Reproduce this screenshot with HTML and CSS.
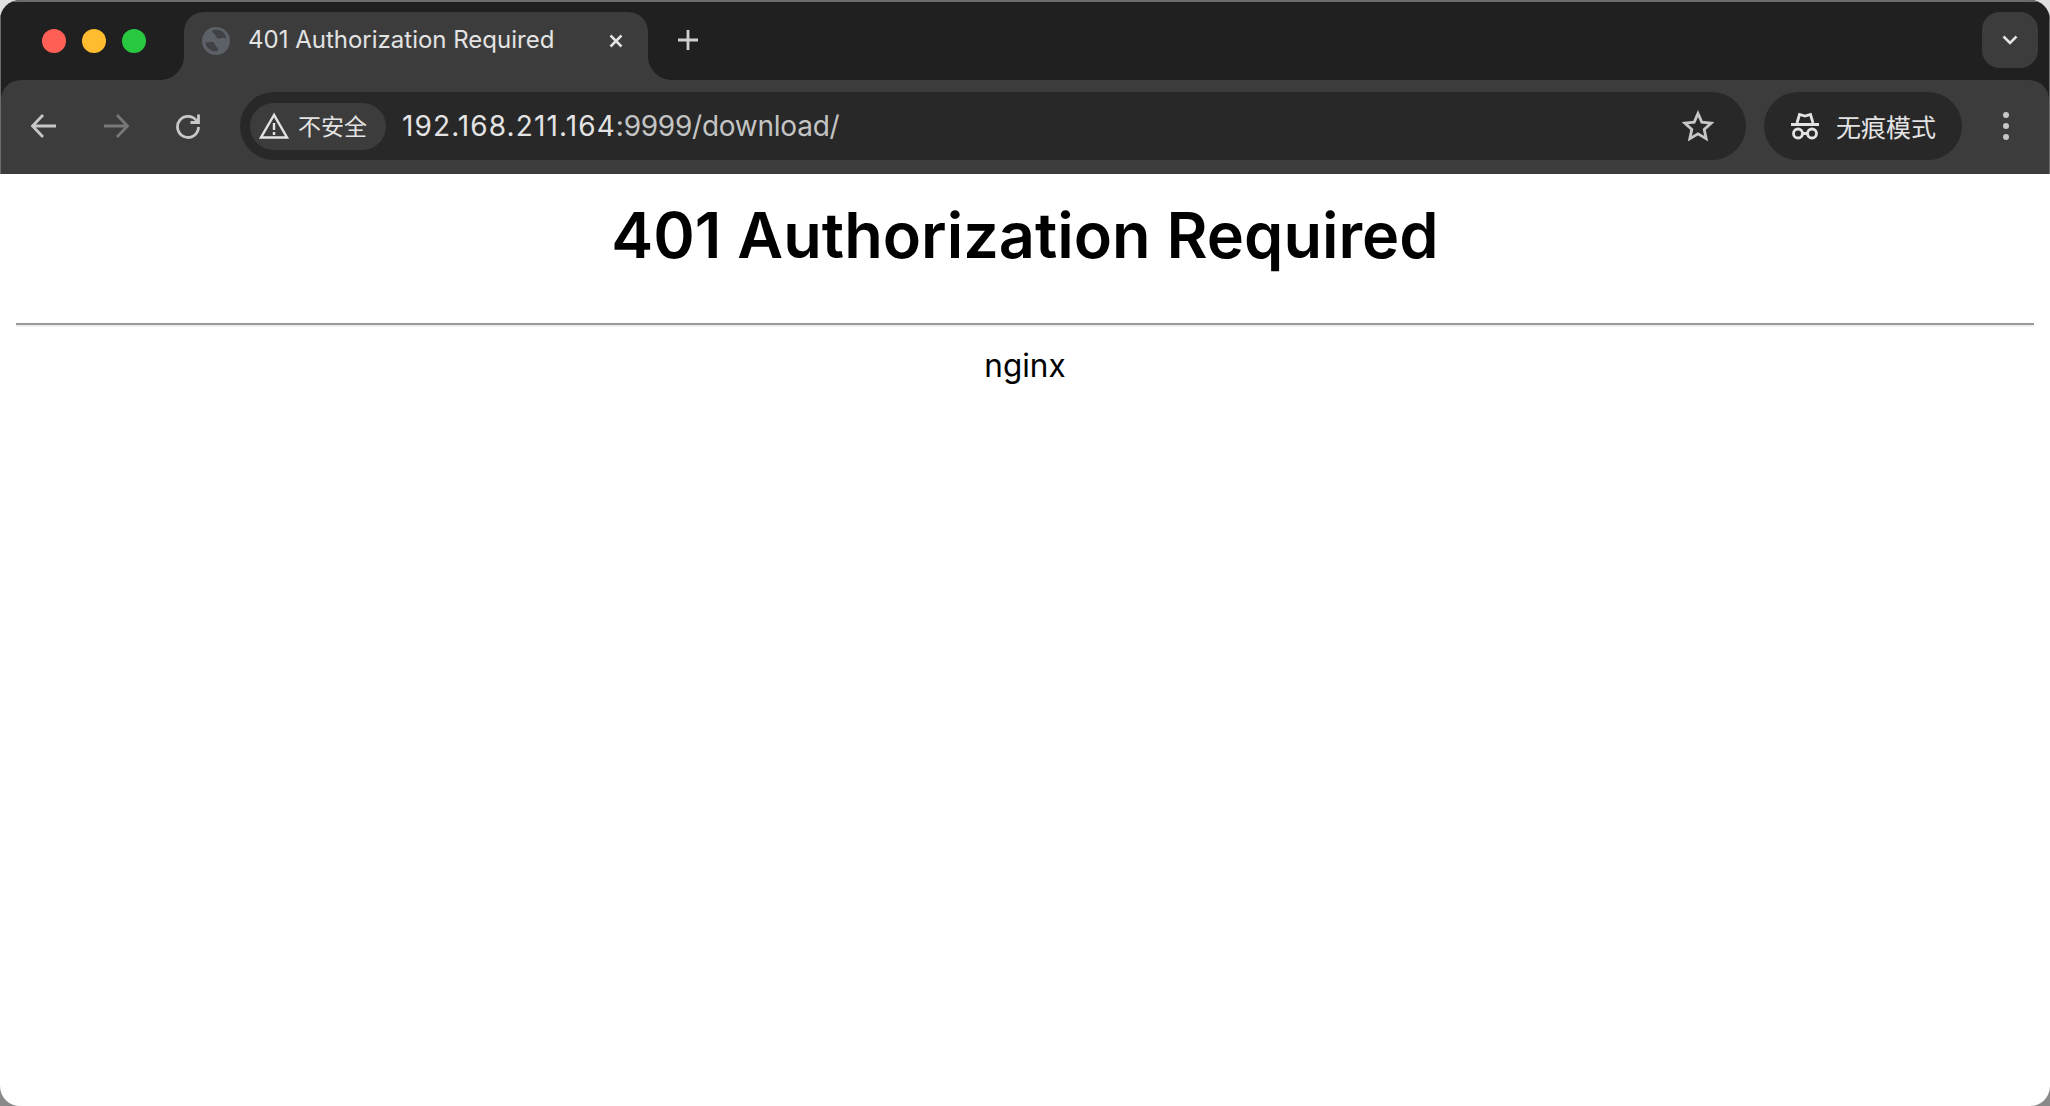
FILE: index.html
```html
<!DOCTYPE html>
<html lang="zh-CN">
<head>
<meta charset="utf-8">
<title>401 Authorization Required</title>
<link rel="stylesheet" href="styles.css">
</head>
<body>
<div class="window">
  <header class="chrome">
    <div class="tabbar">
      <div class="lights">
        <span class="light light-red"></span>
        <span class="light light-yellow"></span>
        <span class="light light-green"></span>
      </div>
      <div class="tab">
        <svg class="favicon" viewBox="0 0 28 28"><circle cx="14" cy="14" r="14" fill="#5c6067"/><path d="M10 3.500c3-1.500 8-1 11 1.500 2 2 3 4 3.500 7-1.500-1-3-1.500-5-1-1.500.5-3 1-4.500 0-1.500-1-1-2.500-2-3.500-.8-1-2.500-1.800-3-4z" fill="#3f4144"/><path d="M3.500 15c1.500.5 3 .5 4.500 0 2-.5 3.500 0 4.500 1.500 1 1.500 1 3 2.500 4 1 .7 1.500 2 .5 3.500-4 .8-7.500-.5-10-3.500-1.500-1.500-2-3.500-2-5.500z" fill="#3f4144"/></svg>
        <span class="tab-title">401 Authorization Required</span>
        <svg class="tab-close" viewBox="0 0 16 16"><path d="M2.500 2.500l11 11M13.500 2.500l-11 11"/></svg>
      </div>
      <svg class="new-tab" viewBox="0 0 22 22"><path d="M11 1v20M1 11h20"/></svg>
      <div class="tab-search">
        <svg viewBox="0 0 16 10"><path d="M1.500 1.500L8 8l6.500-6.500"/></svg>
      </div>
    </div>
    <div class="toolbar">
      <button class="nav-btn" type="button"><svg viewBox="0 0 28 28"><path d="M26 14H3M13 3L2.500 14 13 25"/></svg></button>
      <button class="nav-btn nav-off" type="button"><svg viewBox="0 0 28 28"><path d="M2 14h23M15 3l10.500 11L15 25"/></svg></button>
      <button class="nav-btn" type="button"><svg viewBox="0 0 28 28"><path d="M23 9.500A10.500 10.500 0 1 0 24.500 15M24.500 2.500v8h-8"/></svg></button>
      <div class="omnibox">
        <div class="chip">
          <svg class="warn" viewBox="0 0 30 28"><path class="warn-line" d="M15 3L2 25.500h26z"/><path class="warn-line" d="M15 11v7M15 20v3"/></svg>
          <span class="chip-text">不安全</span>
        </div>
        <div class="url"><span class="url-host">192.168.211.164</span><span class="url-path">:9999/download/</span></div>
        <svg class="star" viewBox="0 0 32 32"><path d="M16 3.500l3.800 8.600 9.400 1-7 6.300 2 9.200-8.200-4.700-8.200 4.700 2-9.200-7-6.300 9.400-1z"/></svg>
      </div>
      <div class="incognito">
        <svg class="spy" viewBox="0 0 30 30"><path class="spy-line" d="M7 12L9.500 3.500 15 5l5.500-1.500L23 12M1 13.500h28"/><circle class="spy-line" cx="8" cy="22.500" r="4.500"/><circle class="spy-line" cx="22" cy="22.500" r="4.500"/><path class="spy-line" d="M12.500 22.500h5"/></svg>
        <span class="incognito-text">无痕模式</span>
      </div>
      <div class="kebab"><span></span><span></span><span></span></div>
    </div>
  </header>
  <main class="page">
    <h1 class="err-title">401 Authorization Required</h1>
    <hr class="err-rule">
    <p class="err-server">nginx</p>
  </main>
</div>
</body>
</html>
```

FILE: styles.css
```css
* { box-sizing: border-box; }
html, body { margin: 0; height: 100%; }
html { background: linear-gradient(#e0e0e0 50%, #8a8a8a 50%); }
body { overflow: hidden; }
.window {
  height: 1106px;
  display: flex;
  flex-direction: column;
  border-radius: 20px;
  overflow: hidden;
  background: #fff;
  font-family: Inter, "Liberation Sans", sans-serif;
}
.chrome { background: #202020; border: 1px solid #6c6c6c; border-top-width: 2px; border-bottom: 0; flex: none; }

.tabbar { height: 78px; display: flex; align-items: flex-start; padding: 10px 11px 0 41px; }
.lights { display: flex; gap: 16px; margin-top: 17px; width: 142px; flex: none; }
.light { width: 24px; height: 24px; border-radius: 50%; }
.light-red { background: #ff5f57; }
.light-yellow { background: #febc2e; }
.light-green { background: #28c840; }

.tab {
  position: relative;
  width: 464px;
  height: 68px;
  flex: none;
  display: flex;
  align-items: flex-start;
  background: #3c3c3c;
  border-radius: 20px 20px 0 0;
  padding: 15px 0 0 18px;
  color: #e3e3e3;
}
.tab::before, .tab::after {
  content: "";
  position: absolute;
  bottom: 0;
  width: 24px;
  height: 24px;
}
.tab::before { left: -24px; background: radial-gradient(circle at 0 0, #202020 23.500px, #3c3c3c 24.500px); }
.tab::after { right: -24px; background: radial-gradient(circle at 100% 0, #202020 23.500px, #3c3c3c 24.500px); }
.favicon { width: 28px; height: 28px; flex: none; }
.tab-title { margin-left: 18px; font-size: 24px; line-height: 26px; white-space: nowrap; }
.tab-close { width: 16px; height: 16px; margin-left: auto; margin-right: 24px; margin-top: 6px; fill: none; stroke: #e3e3e3; stroke-width: 2.500; }
.new-tab { width: 22px; height: 22px; flex: none; margin: 17px 0 0 29px; fill: none; stroke: #d0d0d0; stroke-width: 2.800; }
.tab-search {
  width: 56px;
  height: 56px;
  margin-left: auto;
  border-radius: 18px;
  background: #3c3c3c;
  display: flex;
  align-items: center;
  justify-content: center;
}
.tab-search svg { width: 16px; height: 10px; fill: none; stroke: #e3e3e3; stroke-width: 2.500; }

.toolbar {
  height: 94px;
  background: #3c3c3c;
  border-radius: 20px 20px 0 0;
  display: flex;
  align-items: center;
  padding: 0 7px 2px;
  position: relative;
}
.nav-btn {
  width: 72px;
  height: 56px;
  flex: none;
  padding: 0;
  border: 0;
  background: none;
  display: flex;
  align-items: center;
  justify-content: center;
}
.nav-btn svg { width: 28px; height: 28px; fill: none; stroke: #c7c7c7; stroke-width: 2.800; }
.nav-off svg { stroke: #777; }

.omnibox {
  width: 1506px;
  height: 68px;
  margin-left: 16px;
  flex: none;
  border-radius: 34px;
  background: #282828;
  display: flex;
  align-items: center;
  padding: 0 22px 0 10px;
}
.chip {
  width: 136px;
  height: 47px;
  flex: none;
  border-radius: 24px;
  background: #3c3c3c;
  display: flex;
  align-items: center;
  padding-left: 9px;
}
.warn { width: 30px; height: 28px; flex: none; }
.warn-line { fill: none; stroke: #e3e3e3; stroke-width: 2.400; }
.chip-text {
  margin: 0 0 2px 9px;
  font-family: "Noto Sans CJK SC", sans-serif;
  font-size: 23px;
  line-height: 26px;
  color: #e3e3e3;
  white-space: nowrap;
}
.url { margin-left: 16px; font-size: 28px; white-space: nowrap; }
.url-host { color: #e3e3e3; letter-spacing: 1.100px; }
.url-path { color: #c4c4c4; letter-spacing: -0.250px; }
.star { width: 32px; height: 32px; margin-left: auto; margin-right: 10px; fill: none; stroke: #c7c7c7; stroke-width: 2.800; }

.incognito {
  width: 198px;
  height: 68px;
  margin-left: 18px;
  flex: none;
  border-radius: 34px;
  background: #282828;
  display: flex;
  align-items: center;
  padding-left: 26px;
}
.spy { width: 30px; height: 30px; flex: none; }
.spy-line { fill: none; stroke: #e3e3e3; stroke-width: 2.800; }
.incognito-text {
  margin-left: 16px;
  font-family: "Noto Sans CJK SC", sans-serif;
  font-size: 25px;
  line-height: 26px;
  color: #e3e3e3;
  white-space: nowrap;
}
.kebab {
  width: 12px;
  flex: none;
  margin-left: 38px;
  display: flex;
  flex-direction: column;
  align-items: center;
  gap: 5px;
}
.kebab span { width: 6px; height: 6px; border-radius: 50%; background: #c7c7c7; }

.page { flex: 1; padding: 0 16px; color: #000; text-align: center; }
.err-title { margin: 24px 0 0; font-size: 63px; line-height: 74px; font-weight: 600; }
.err-rule { margin: 51px 0 0; border: 0; height: 4px; background: linear-gradient(#999 50%, #eee 50%); }
.err-server { margin: 20px 0 0; font-size: 31.500px; line-height: 37px; }
```
